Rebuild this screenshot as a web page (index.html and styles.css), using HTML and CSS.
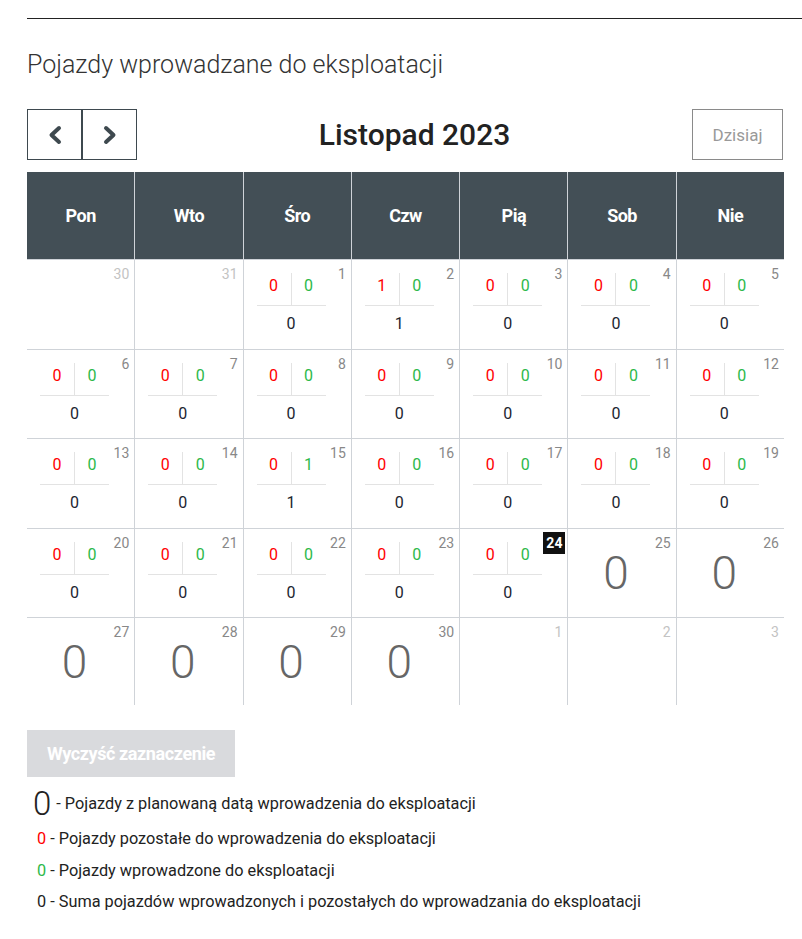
FILE: index.html
```html
<!DOCTYPE html>
<html lang="pl">
<head>
<meta charset="utf-8">
<title>Pojazdy wprowadzane do eksploatacji</title>
<link rel="stylesheet" href="styles.css">
</head>
<body>
<div class="page">
  <div class="rule"></div>
  <h1 class="page-title">Pojazdy wprowadzane do eksploatacji</h1>

  <div class="calendar">
    <div class="toolbar">
      <div class="nav">
        <button class="nav-btn" type="button" aria-label="Poprzedni">
          <svg width="16" height="20" viewBox="0 0 16 20"><polyline points="12,3 4.5,10 12,17" fill="none" stroke="#3e494f" stroke-width="4" stroke-linecap="round" stroke-linejoin="round"/></svg>
        </button>
        <button class="nav-btn" type="button" aria-label="Następny">
          <svg width="16" height="20" viewBox="0 0 16 20"><polyline points="4,3 11.5,10 4,17" fill="none" stroke="#3e494f" stroke-width="4" stroke-linecap="round" stroke-linejoin="round"/></svg>
        </button>
      </div>
      <h2 class="month">Listopad 2023</h2>
      <button class="today-btn" type="button">Dzisiaj</button>
    </div>

    <div class="grid">
      <div class="head">Pon</div>
      <div class="head">Wto</div>
      <div class="head">Śro</div>
      <div class="head">Czw</div>
      <div class="head">Pią</div>
      <div class="head">Sob</div>
      <div class="head">Nie</div>

      <!-- row 1 -->
      <div class="cell other"><div class="body"></div><span class="day">30</span></div>
      <div class="cell other"><div class="body"></div><span class="day">31</span></div>
      <div class="cell"><div class="body mini"><div class="top"><span class="r">0</span><span class="g">0</span></div><div class="sum">0</div></div><span class="day">1</span></div>
      <div class="cell"><div class="body mini"><div class="top"><span class="r">1</span><span class="g">0</span></div><div class="sum">1</div></div><span class="day">2</span></div>
      <div class="cell"><div class="body mini"><div class="top"><span class="r">0</span><span class="g">0</span></div><div class="sum">0</div></div><span class="day">3</span></div>
      <div class="cell"><div class="body mini"><div class="top"><span class="r">0</span><span class="g">0</span></div><div class="sum">0</div></div><span class="day">4</span></div>
      <div class="cell"><div class="body mini"><div class="top"><span class="r">0</span><span class="g">0</span></div><div class="sum">0</div></div><span class="day">5</span></div>

      <!-- row 2 -->
      <div class="cell"><div class="body mini"><div class="top"><span class="r">0</span><span class="g">0</span></div><div class="sum">0</div></div><span class="day">6</span></div>
      <div class="cell"><div class="body mini"><div class="top"><span class="r">0</span><span class="g">0</span></div><div class="sum">0</div></div><span class="day">7</span></div>
      <div class="cell"><div class="body mini"><div class="top"><span class="r">0</span><span class="g">0</span></div><div class="sum">0</div></div><span class="day">8</span></div>
      <div class="cell"><div class="body mini"><div class="top"><span class="r">0</span><span class="g">0</span></div><div class="sum">0</div></div><span class="day">9</span></div>
      <div class="cell"><div class="body mini"><div class="top"><span class="r">0</span><span class="g">0</span></div><div class="sum">0</div></div><span class="day">10</span></div>
      <div class="cell"><div class="body mini"><div class="top"><span class="r">0</span><span class="g">0</span></div><div class="sum">0</div></div><span class="day">11</span></div>
      <div class="cell"><div class="body mini"><div class="top"><span class="r">0</span><span class="g">0</span></div><div class="sum">0</div></div><span class="day">12</span></div>

      <!-- row 3 -->
      <div class="cell"><div class="body mini"><div class="top"><span class="r">0</span><span class="g">0</span></div><div class="sum">0</div></div><span class="day">13</span></div>
      <div class="cell"><div class="body mini"><div class="top"><span class="r">0</span><span class="g">0</span></div><div class="sum">0</div></div><span class="day">14</span></div>
      <div class="cell"><div class="body mini"><div class="top"><span class="r">0</span><span class="g">1</span></div><div class="sum">1</div></div><span class="day">15</span></div>
      <div class="cell"><div class="body mini"><div class="top"><span class="r">0</span><span class="g">0</span></div><div class="sum">0</div></div><span class="day">16</span></div>
      <div class="cell"><div class="body mini"><div class="top"><span class="r">0</span><span class="g">0</span></div><div class="sum">0</div></div><span class="day">17</span></div>
      <div class="cell"><div class="body mini"><div class="top"><span class="r">0</span><span class="g">0</span></div><div class="sum">0</div></div><span class="day">18</span></div>
      <div class="cell"><div class="body mini"><div class="top"><span class="r">0</span><span class="g">0</span></div><div class="sum">0</div></div><span class="day">19</span></div>

      <!-- row 4 -->
      <div class="cell"><div class="body mini"><div class="top"><span class="r">0</span><span class="g">0</span></div><div class="sum">0</div></div><span class="day">20</span></div>
      <div class="cell"><div class="body mini"><div class="top"><span class="r">0</span><span class="g">0</span></div><div class="sum">0</div></div><span class="day">21</span></div>
      <div class="cell"><div class="body mini"><div class="top"><span class="r">0</span><span class="g">0</span></div><div class="sum">0</div></div><span class="day">22</span></div>
      <div class="cell"><div class="body mini"><div class="top"><span class="r">0</span><span class="g">0</span></div><div class="sum">0</div></div><span class="day">23</span></div>
      <div class="cell"><div class="body mini"><div class="top"><span class="r">0</span><span class="g">0</span></div><div class="sum">0</div></div><span class="day today">24</span></div>
      <div class="cell"><div class="body big">0</div><span class="day">25</span></div>
      <div class="cell"><div class="body big">0</div><span class="day">26</span></div>

      <!-- row 5 -->
      <div class="cell"><div class="body big">0</div><span class="day">27</span></div>
      <div class="cell"><div class="body big">0</div><span class="day">28</span></div>
      <div class="cell"><div class="body big">0</div><span class="day">29</span></div>
      <div class="cell"><div class="body big">0</div><span class="day">30</span></div>
      <div class="cell other"><div class="body"></div><span class="day">1</span></div>
      <div class="cell other"><div class="body"></div><span class="day">2</span></div>
      <div class="cell other"><div class="body"></div><span class="day">3</span></div>
    </div>
  </div>

  <button class="clear-btn" type="button">Wyczyść zaznaczenie</button>

  <ul class="legend">
    <li class="legend-item first"><span class="lg-big">0</span> - Pojazdy z planowaną datą wprowadzenia do eksploatacji</li>
    <li class="legend-item"><span class="r">0</span> - Pojazdy pozostałe do wprowadzenia do eksploatacji</li>
    <li class="legend-item"><span class="g">0</span> - Pojazdy wprowadzone do eksploatacji</li>
    <li class="legend-item"><span>0</span> - Suma pojazdów wprowadzonych i pozostałych do wprowadzania do eksploatacji</li>
  </ul>
</div>
</body>
</html>
```
FILE: styles.css
```css
* { box-sizing: border-box; }

body {
  margin: 0;
  background: #fff;
  font-family: Roboto, "Liberation Sans", Arial, sans-serif;
  color: #222;
}

.page {
  padding-left: 27px;
}

.rule {
  margin-top: 18px;
  border-top: 1px solid #222;
}

.page-title {
  margin: 31px 0 0 0;
  font-size: 25px;
  line-height: 30px;
  font-weight: 300;
  color: #333;
}

.calendar {
  width: 757px;
  margin-top: 29px;
}

.toolbar {
  display: flex;
  justify-content: space-between;
  align-items: center;
  height: 51px;
}

.nav {
  display: flex;
}

.nav-btn {
  width: 55px;
  height: 51px;
  margin: 0;
  padding: 0;
  background: #fff;
  border: 1px solid #3e494f;
  display: flex;
  align-items: center;
  justify-content: center;
}

.month {
  margin: 0;
  font-size: 30px;
  font-weight: 500;
  color: #222;
}

.today-btn {
  width: 91px;
  height: 51px;
  margin-right: 1px;
  background: #fff;
  border: 1px solid #8a8a8a;
  color: #999;
  font-family: inherit;
  font-size: 17px;
}

.grid {
  margin-top: 12px;
  display: grid;
  grid-template-columns: repeat(7, 1fr);
  grid-template-rows: 87px 89px 88px 89px 88px 87px;
  gap: 1px;
  background: #cfd3d8;
}

.head {
  background: #434f56;
  color: #fff;
  display: flex;
  align-items: center;
  justify-content: center;
  font-size: 18px;
  font-weight: 700;
  letter-spacing: -0.5px;
}

.cell {
  background: #fff;
  display: flex;
  justify-content: space-between;
  align-items: flex-start;
  padding: 3px 2px 0 13px;
}

.body {
  width: 69px;
}

.day {
  font-size: 14px;
  line-height: 18px;
  padding: 2px 3px;
  color: #888;
}

.other .day {
  color: #c3c3c3;
}

.day.today {
  background: #111;
  color: #fff;
  font-weight: 700;
}

.mini {
  margin-top: 10px;
  font-size: 16px;
  text-align: center;
}

.mini .top {
  display: flex;
  border-bottom: 1px solid #e3e3e3;
}

.mini .top span {
  flex: 1;
  line-height: 22px;
  padding: 2px 0 8px;
}

.mini .top .r {
  border-right: 1px solid #e3e3e3;
}

.r { color: #ff0000; }
.g { color: #2db94a; }

.mini .sum {
  line-height: 22px;
  margin-top: 7px;
  color: #1c2530;
}

.big {
  margin-top: 18px;
  font-size: 46px;
  line-height: 46px;
  font-weight: 300;
  color: #666;
  text-align: center;
}

.clear-btn {
  display: block;
  margin-top: 25px;
  width: 208px;
  height: 47px;
  border: none;
  background: #d9dadd;
  color: #fff;
  font-family: inherit;
  font-size: 18px;
  font-weight: 700;
  letter-spacing: -0.4px;
}

.legend {
  list-style: none;
  margin: 13px 0 0 0;
  padding: 0;
  font-size: 16.3px;
  color: #222;
}

.legend-item {
  line-height: 20px;
  padding-left: 10px;
  margin-bottom: 11.5px;
}

.legend-item.first {
  padding-left: 6px;
  display: flex;
  align-items: center;
  gap: 5px;
  margin-bottom: 11px;
  height: 28px;
}

.lg-big {
  font-size: 33px;
  font-weight: 300;
  line-height: 28px;
  color: #222;
}
```
